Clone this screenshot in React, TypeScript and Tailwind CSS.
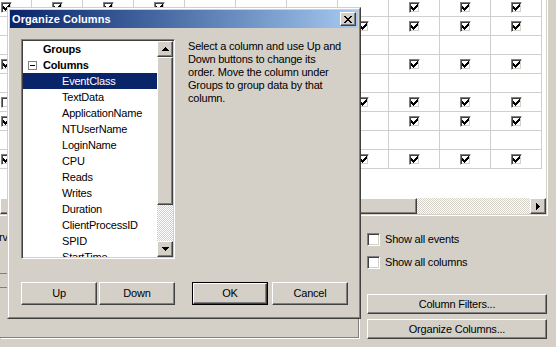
import React from 'react';

/* ─── classic 3D edges ─────────────────────────────────── */
const raised =
  'border border-t-white border-l-white border-r-[#404040] border-b-[#404040] shadow-[inset_-1px_-1px_0_#808080] bg-[#d4d0c8]';
const sunken =
  'border border-t-[#808080] border-l-[#808080] border-r-white border-b-white shadow-[inset_1px_1px_0_#404040,inset_-1px_-1px_0_#d4d0c8]';

/* rows (0..8) that carry a check, per grid column */
const colChecks: number[][] = [
  [0, 3, 6, 8],
  [0, 1, 3, 5, 6, 8],
  [0, 1, 3, 5, 6, 8],
  [0, 1, 3, 5, 6, 8],
  [],
  [],
  [],
  [1, 5, 8],
  [0, 1, 3, 5, 6, 8],
  [0, 1, 3, 5, 6, 8],
  [0, 1, 3, 5, 6, 8],
];
const emptyBoxes: Record<string, boolean> = { '0-5': true };

const listItems = [
  'EventClass',
  'TextData',
  'ApplicationName',
  'NTUserName',
  'LoginName',
  'CPU',
  'Reads',
  'Writes',
  'Duration',
  'ClientProcessID',
  'SPID',
  'StartTime',
];

function Tick() {
  return (
    <svg width="7" height="7" viewBox="0 0 7 7" className="block" fill="#000">
      <path d="M6 0h1v1H6zM5 1h2v1H5zM0 2h1v1H0zM4 2h3v1H4zM0 3h2v1H0zM3 3h3v1H3zM0 4h5v1H0zM1 5h3v1H1zM2 6h1v1H2z" />
    </svg>
  );
}

function GridCheck({ checked }: { checked: boolean }) {
  return (
    <span className={`w-[11px] h-[11px] flex items-center justify-center bg-white ${sunken}`}>
      {checked && <Tick />}
    </span>
  );
}

function Arrow({ dir }: { dir: 'up' | 'down' | 'right' }) {
  if (dir === 'right')
    return (
      <svg width="4" height="7" viewBox="0 0 4 7" fill="#000" className="block">
        <path d="M0 0h1v7H0zM1 1h1v5H1zM2 2h1v3H2zM3 3h1v1H3z" />
      </svg>
    );
  const d =
    dir === 'up'
      ? 'M3 0h1v1H3zM2 1h3v1H2zM1 2h5v1H1zM0 3h7v1H0z'
      : 'M0 0h7v1H0zM1 1h5v1H1zM2 2h3v1H2zM3 3h1v1H3z';
  return (
    <svg width="7" height="4" viewBox="0 0 7 4" fill="#000" className="block">
      <path d={d} />
    </svg>
  );
}

function Button({ label, w, h, primary }: { label: string; w: string; h: string; primary?: boolean }) {
  return (
    <div className={`${w} ${h} flex ${primary ? 'border border-black' : ''}`}>
      <div className={`flex-1 flex items-center justify-center ${raised}`}>
        <span className="leading-none">{label}</span>
      </div>
    </div>
  );
}

/* ─── the dialog ───────────────────────────────────────── */
function OrganizeDialog() {
  return (
    <div className="absolute left-[7px] top-[7px] w-[354px] h-[312px] bg-[#d4d0c8] border border-t-[#d4d0c8] border-l-[#d4d0c8] border-r-[#404040] border-b-[#404040]">
      <div className="h-full flex flex-col p-px border border-t-white border-l-white border-r-[#808080] border-b-[#808080]">
        {/* Title bar */}
        <div className="h-[18px] flex items-center justify-between px-[2px] bg-gradient-to-r from-[#0a246a] to-[#a6caf0]">
          <span className="text-white font-bold text-[11px] leading-none tracking-[0.1px]">Organize Columns</span>
          <div className={`w-[16px] h-[14px] flex items-center justify-center ${raised}`}>
            <svg width="8" height="7" viewBox="0 0 8 7" fill="#000" className="block">
              <path d="M0 0h2v1H0zM6 0h2v1H6zM1 1h2v1H1zM5 1h2v1H5zM2 2h4v1H2zM3 3h2v1H3zM2 4h4v1H2zM1 5h2v1H1zM5 5h2v1H5zM0 6h2v1H0zM6 6h2v1H6z" />
            </svg>
          </div>
        </div>

        {/* Body */}
        <div className="pl-[11px] pt-[11px]">
          <div className="flex">
            {/* List box */}
            <div className={`w-[154px] h-[220px] flex p-px ${sunken}`}>
              <div className="flex-1 bg-white overflow-hidden">
                <div className="h-[16px] flex items-center pl-[20px] font-bold">Groups</div>
                <div className="h-[16px] flex items-center pl-[5px] font-bold">
                  <span className="w-[9px] h-[9px] border border-[#808080] bg-white flex items-center justify-center mr-[6px]">
                    <span className="w-[5px] h-px bg-black" />
                  </span>
                  Columns
                </div>
                {listItems.map((item, i) => (
                  <div
                    key={item}
                    className={`h-[16px] flex items-center pl-[39px] ${i === 0 ? 'bg-[#0a246a] text-white' : ''}`}
                  >
                    {item}
                  </div>
                ))}
              </div>
              {/* vertical scrollbar */}
              <div className="w-[16px] flex flex-col">
                <div className={`h-[16px] flex items-center justify-center ${raised}`}>
                  <Arrow dir="up" />
                </div>
                <div className={`h-[148px] ${raised}`} />
                <div className="flex-1 bg-[repeating-conic-gradient(#d4d0c8_0%_25%,#ffffff_0%_50%)] bg-size-[2px_2px]" />
                <div className={`h-[16px] flex items-center justify-center ${raised}`}>
                  <Arrow dir="down" />
                </div>
              </div>
            </div>

            {/* Help text */}
            <p className="ml-[13px] leading-[13px] pt-px">
              Select a column and use Up and
              <br />
              Down buttons to change its
              <br />
              order. Move the column under
              <br />
              Groups to group data by that
              <br />
              column.
            </p>
          </div>

          {/* Buttons */}
          <div className="flex mt-[23px]">
            <Button label="Up" w="w-[76px]" h="h-[23px]" />
            <div className="ml-[2px]">
              <Button label="Down" w="w-[76px]" h="h-[23px]" />
            </div>
            <div className="ml-[17px]">
              <Button label="OK" w="w-[76px]" h="h-[23px]" primary />
            </div>
            <div className="ml-[4px]">
              <Button label="Cancel" w="w-[76px]" h="h-[23px]" />
            </div>
          </div>
        </div>
      </div>
    </div>
  );
}

/* ─── page ─────────────────────────────────────────────── */
export default function App() {
  return (
    <div className="relative w-[556px] h-[347px] overflow-hidden bg-[#d4d0c8] font-['Liberation_Sans',Arial,sans-serif] text-[11px] leading-none tracking-[-0.2px] text-black select-none">
      {/* Trace grid behind the dialog */}
      <div className="w-[548px] h-[216px] border-r border-b border-white">
        <div className="h-full flex flex-col border-r border-b border-[#d4d0c8]">
          <div className="h-[198px] bg-white overflow-hidden">
            <div className="-ml-[19px] -mt-[2px]">
              {Array.from({ length: 9 }, (_, r) => (
                <div key={r} className="flex">
                  {colChecks.map((rows, c) => (
                    <div
                      key={c}
                      className="w-[51px] h-[19px] flex-none flex items-center justify-center border-r border-b border-[#cfcfcf]"
                    >
                      {rows.includes(r) && <GridCheck checked />}
                      {emptyBoxes[`${c}-${r}`] && <GridCheck checked={false} />}
                    </div>
                  ))}
                </div>
              ))}
            </div>
          </div>
          {/* horizontal scrollbar */}
          <div className="h-[16px] flex">
            <div className={`w-[417px] ${raised}`} />
            <div className="flex-1 bg-[repeating-conic-gradient(#d4d0c8_0%_25%,#ffffff_0%_50%)] bg-size-[2px_2px]" />
            <div className={`w-[16px] flex items-center justify-center ${raised}`}>
              <Arrow dir="right" />
            </div>
          </div>
        </div>
      </div>

      {/* Lower part of the window */}
      <div className="flex">
        <div className="w-[359px] h-[122px] flex-none border-r border-b border-[#808080] shadow-[1px_1px_0_#ffffff]">
          <div className="-ml-[14px] mt-[15px] leading-[13px] whitespace-nowrap">Server</div>
          <div className="w-[120px] h-[15px] mt-[29px] border-t border-b border-[#808080]" />
        </div>
        <div className="pl-[8px] pt-[17px] flex flex-col">
          <label className="flex items-center gap-[5px] h-[13px]">
            <span className={`w-[13px] h-[13px] bg-white ${sunken}`} />
            Show all events
          </label>
          <label className="flex items-center gap-[5px] h-[13px] mt-[10px]">
            <span className={`w-[13px] h-[13px] bg-white ${sunken}`} />
            Show all columns
          </label>
          <div className="mt-[25px]">
            <Button label="Column Filters..." w="w-[180px]" h="h-[20px]" />
          </div>
          <div className="mt-[5px]">
            <Button label="Organize Columns..." w="w-[180px]" h="h-[20px]" />
          </div>
        </div>
      </div>

      <OrganizeDialog />
    </div>
  );
}
